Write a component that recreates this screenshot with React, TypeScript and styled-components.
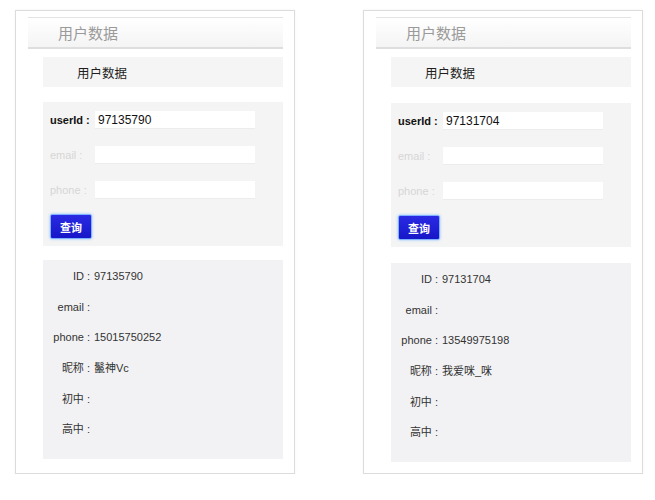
import React from "react";
import styled, { createGlobalStyle } from "styled-components";

const GlobalStyle = createGlobalStyle`
  html, body {
    margin: 0;
    padding: 0;
    background: #ffffff;
    font-family: "Liberation Sans", "Noto Sans CJK SC", sans-serif;
  }
`;

const Page = styled.div`
  display: flex;
  gap: 68px;
  padding: 10px 0 0 15px;
`;

const Panel = styled.div`
  width: 280px;
  height: 464px;
  box-sizing: border-box;
  border: 1px solid #dcdcdc;
  box-shadow: 0 0 2px rgba(0, 0, 0, 0.06);
  padding: 6px 11px 0 12px;
  display: flex;
  flex-direction: column;
`;

const Header = styled.div`
  height: 32px;
  box-sizing: border-box;
  border-top: 1px solid #e4e4e4;
  border-bottom: 2px solid #dedede;
  background: linear-gradient(#ffffff, #f4f4f4);
  display: flex;
  align-items: center;
  padding-left: 30px;
  font-size: 15px;
  color: #9a9a9a;
`;

const SubHeader = styled.div`
  margin: 8px 0 0 15px;
  height: 30px;
  background: #f5f5f5;
  display: flex;
  align-items: center;
  padding-left: 34px;
  font-size: 12.5px;
  color: #1e1e1e;
`;

const FormBox = styled.div<{ $top: number }>`
  margin: ${(p) => p.$top}px 0 0 15px;
  height: 144px;
  box-sizing: border-box;
  background: #f4f4f4;
  padding: 9px 0 0 7px;
  display: flex;
  flex-direction: column;
`;

const FieldRow = styled.div`
  display: flex;
  align-items: center;
  height: 18px;
  margin-bottom: 17px;
`;

const FieldLabel = styled.label<{ $muted?: boolean }>`
  width: 45px;
  font-size: 11px;
  color: ${(p) => (p.$muted ? "#d6d6d6" : "#111")};
  font-weight: ${(p) => (p.$muted ? "normal" : "bold")};
`;

const Input = styled.div`
  width: 160px;
  height: 18px;
  box-sizing: border-box;
  background: #ffffff;
  border-bottom: 1px solid #ececec;
  padding-left: 3px;
  font-size: 12px;
  color: #111;
  display: flex;
  align-items: center;
`;

const QueryButton = styled.button`
  margin-top: -2px;
  width: 42px;
  height: 25px;
  border: 1px solid #7fb2ff;
  border-radius: 2px;
  background: linear-gradient(#2a2ae4, #1717c8);
  box-shadow: 0 0 3px #8ec0ff;
  color: #ffffff;
  font-size: 11px;
  font-weight: bold;
  font-family: "Liberation Sans", "Noto Sans CJK SC", sans-serif;
  padding: 0;
`;

const ResultBox = styled.div<{ $top: number }>`
  margin: ${(p) => p.$top}px 0 0 15px;
  height: 199px;
  box-sizing: border-box;
  background: #f2f2f4;
  padding: 1px 0 0 9px;
  display: flex;
  flex-direction: column;
`;

const ResultRow = styled.div`
  display: flex;
  align-items: center;
  height: 30.4px;
  font-size: 11px;
  color: #333;
`;

const ResultLabel = styled.span`
  width: 38px;
  text-align: right;
  white-space: nowrap;
`;

const ResultValue = styled.span`
  margin-left: 4px;
`;

type UserCard = {
  userId: string;
  phone: string;
  nick: string;
  formTop: number;
  resultTop: number;
};

const cards: UserCard[] = [
  { userId: "97135790", phone: "15015750252", nick: "鬣神Vc", formTop: 15, resultTop: 14 },
  { userId: "97131704", phone: "13549975198", nick: "我爱咪_咪", formTop: 16, resultTop: 16 },
];

const UserPanel: React.FC<{ card: UserCard }> = ({ card }) => {
  const rows: [string, string][] = [
    ["ID :", card.userId],
    ["email :", ""],
    ["phone :", card.phone],
    ["昵称 :", card.nick],
    ["初中 :", ""],
    ["高中 :", ""],
  ];
  return (
    <Panel>
      <Header>用户数据</Header>
      <SubHeader>用户数据</SubHeader>
      <FormBox $top={card.formTop}>
        <FieldRow>
          <FieldLabel>userId :</FieldLabel>
          <Input>{card.userId}</Input>
        </FieldRow>
        <FieldRow>
          <FieldLabel $muted>email :</FieldLabel>
          <Input />
        </FieldRow>
        <FieldRow>
          <FieldLabel $muted>phone :</FieldLabel>
          <Input />
        </FieldRow>
        <QueryButton>查询</QueryButton>
      </FormBox>
      <ResultBox $top={card.resultTop}>
        {rows.map(([label, value]) => (
          <ResultRow key={label}>
            <ResultLabel>{label}</ResultLabel>
            <ResultValue>{value}</ResultValue>
          </ResultRow>
        ))}
      </ResultBox>
    </Panel>
  );
};

export default function App() {
  return (
    <>
      <GlobalStyle />
      <Page>
        {cards.map((c) => (
          <UserPanel key={c.userId} card={c} />
        ))}
      </Page>
    </>
  );
}
